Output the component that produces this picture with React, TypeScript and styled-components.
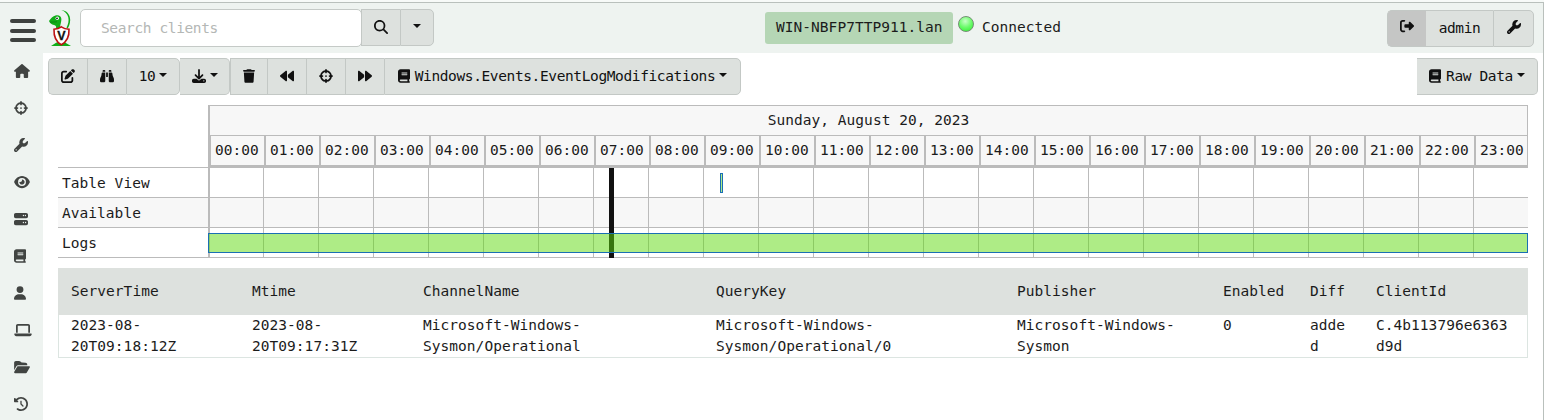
import React from 'react';
import styled, { createGlobalStyle } from 'styled-components';
import {
  FaPenToSquare, FaBinoculars, FaDownload, FaTrash, FaBackward, FaForward, FaCrosshairs, FaBook,
  FaMagnifyingGlass, FaRightFromBracket, FaWrench, FaHouse, FaEye, FaServer, FaUser, FaLaptop,
  FaFolderOpen, FaClockRotateLeft,
} from 'react-icons/fa6';

const Global = createGlobalStyle`
  *, *::before, *::after { box-sizing: border-box; }
  body {
    margin: 0;
    background: #fff;
    color: #1b1b1b;
    font-family: "DejaVu Sans Mono", "Liberation Mono", monospace;
    font-size: 14.5px;
    line-height: 21px;
    letter-spacing: 0.04px;
    overflow: hidden;
  }
`;

const Page = styled.div`
  width: 1544px;
  height: 420px;
  padding-top: 2px;
  display: flex;
  flex-direction: column;
  background: #f7faf8;
`;

const Frame = styled.div`
  flex: 1;
  display: flex;
  flex-direction: column;
  border-top: 1px solid #b9c0bc;
  border-right: 1px solid #b9c0bc;
  background: #fff;
`;

const Header = styled.header`
  height: 50px;
  flex: none;
  display: flex;
  align-items: flex-start;
  background: #eef3f0;
`;

const MenuButton = styled.div`
  width: 26px;
  height: 23px;
  margin: 16px 0 0 10px;
  display: flex;
  flex-direction: column;
  justify-content: space-between;
`;

const MenuBar = styled.span`
  height: 4px;
  border-radius: 2px;
  background: #3e413f;
`;

const Logo = styled.svg`
  width: 24px;
  height: 38px;
  margin: 6px 0 0 12px;
`;

const SearchInput = styled.input`
  width: 282px;
  height: 38px;
  margin: 6px 0 0 8px;
  padding: 0 0 0 20px;
  border: 1px solid #c5cac7;
  border-radius: 5px;
  background: #fff;
  font: inherit;
  letter-spacing: -0.38px;
  outline: none;
  &::placeholder { color: #b4b7b5; opacity: 1; }
`;

const Group = styled.div<{ $top?: number; $left?: number; $right?: number }>`
  display: flex;
  height: 37px;
  margin: ${p => p.$top ?? 0}px ${p => p.$right ?? 0}px 0 ${p => p.$left ?? 0}px;
`;

const Button = styled.button<{ $w: number; $start?: boolean; $end?: boolean; $active?: boolean; $edge?: boolean; $pad?: number }>`
  width: ${p => p.$w}px;
  height: 37px;
  padding: 0 0 ${p => p.$pad ?? 1}px;
  display: flex;
  align-items: center;
  justify-content: center;
  gap: 5px;
  border: 1px solid #c3c8c5;
  border-left-width: ${p => (p.$edge ? 0 : 1)}px;
  border-right-width: ${p => (p.$end ? 1 : 0)}px;
  border-radius: ${p => `${p.$start ? 5 : 0}px ${p.$end ? 5 : 0}px ${p.$end ? 5 : 0}px ${p.$start ? 5 : 0}px`};
  background: ${p => (p.$active ? '#c5c6c5' : '#dde1de')};
  color: #111;
  font: inherit;
  letter-spacing: -0.38px;
  white-space: nowrap;
`;

/* Glyph widths follow each icon's own aspect ratio at a 14px height. */
const Glyph = styled.span<{ $w?: number }>`
  display: block;
  flex: none;
  width: ${p => p.$w ?? 14}px;
  height: 14px;
  svg { display: block; width: 100%; height: 100%; }
`;

const Caret = styled.span`
  border-top: 4px solid #111;
  border-left: 4px solid transparent;
  border-right: 4px solid transparent;
  margin: 0 0 2px -1px;
`;

const Host = styled.div`
  width: 188px;
  height: 32px;
  margin: 9px 0 0 331px;
  padding-left: 11px;
  line-height: 30px;
  border-radius: 3px;
  background: #b5d6b5;
`;

const StatusDot = styled.span`
  width: 16px;
  height: 16px;
  margin: 13px 8px 0 5px;
  border: 1px solid #738f73;
  border-radius: 50%;
  background: radial-gradient(circle at 45% 30%, #c9ffc9 0, #6bfb6b 50%, #2cec2c 100%);
`;

const Status = styled.span`
  flex: 1;
  margin-top: 14px;
`;

const Body = styled.div`
  flex: 1;
  display: flex;
`;

const Sidebar = styled.nav`
  width: 43px;
  flex: none;
  padding: 0 0 0 14px;
  display: flex;
  flex-direction: column;
  background: #eef3f0;
  color: #414442;
`;

const NavItem = styled.div`
  height: 37px;
  padding-bottom: 1px;
  display: flex;
  align-items: center;
`;

const Main = styled.main`
  flex: 1;
  min-width: 0;
`;

const Toolbar = styled.div`
  display: flex;
  justify-content: space-between;
  padding: 5px 5px 0;
`;

const Timeline = styled.section`
  width: 1470px;
  margin: 10px 0 0 15px;
`;

const TimeHead = styled.div`
  height: 62px;
  margin-left: 150px;
  border: solid #bbb;
  border-width: 1px 1px 2px 2px;
  background: #f7f7f7;
`;

const Day = styled.div`
  height: 29px;
  line-height: 28px;
  text-align: center;
`;

const Hours = styled.div`
  height: 30px;
  margin-left: -1px;
  display: flex;
  border-top: 1px solid #bbb;
`;

const Hour = styled.div`
  width: 55px;
  flex: none;
  padding-left: 4px;
  line-height: 28px;
  border-left: 2px solid #bbb;
  &:last-child { width: 53px; }
`;

const Rows = styled.div`
  position: relative;
  border-top: 1px solid #bbb;
`;

const Row = styled.div<{ $shade?: boolean }>`
  height: 30px;
  display: flex;
  border-bottom: 1px solid #bbb;
  background: ${p => (p.$shade ? '#f7f7f7' : '#fff')};
`;

const RowLabel = styled.div`
  width: 150px;
  flex: none;
  padding-left: 4px;
  line-height: 31px;
`;

const Cells = styled.div`
  flex: 1;
  display: flex;
  border-left: 2px solid #bbb;
`;

const Cell = styled.div`
  width: 55px;
  flex: none;
  border-right: 1px solid #bbb;
  &:first-child { width: 54px; }
  &:last-child { width: 54px; border-right: 0; }
`;

const Marker = styled.div`
  position: absolute;
  left: 551px;
  top: 0;
  width: 5px;
  height: 90px;
  background: #111;
`;

const Span = styled.div<{ $x: number; $y: number; $w: number }>`
  position: absolute;
  left: ${p => p.$x}px;
  top: ${p => p.$y}px;
  width: ${p => p.$w}px;
  height: 20px;
  border: 1px solid #1a6fb3;
  background: rgba(94, 217, 14, 0.5);
`;

const Table = styled.table`
  width: 1470px;
  margin: 10px 0 0 15px;
  border-collapse: separate;
  border-spacing: 0;
  table-layout: fixed;
`;

const Th = styled.th`
  height: 47px;
  padding: 0 0 0 13px;
  text-align: left;
  font-weight: normal;
  background: #dde1de;
`;

const Td = styled.td`
  height: 43px;
  padding: 0 0 0 13px;
  vertical-align: top;
  white-space: pre;
  border-bottom: 1px solid #dce5e1;
  &:first-child { border-left: 1px solid #dce5e1; padding-left: 12px; }
  &:last-child { border-right: 1px solid #dce5e1; }
`;

const navItems = [
  { Icon: FaHouse, width: 16 },
  { Icon: FaCrosshairs, width: 14 },
  { Icon: FaWrench, width: 14 },
  { Icon: FaEye, width: 16 },
  { Icon: FaServer, width: 14 },
  { Icon: FaBook, width: 12 },
  { Icon: FaUser, width: 12 },
  { Icon: FaLaptop, width: 18 },
  { Icon: FaFolderOpen, width: 16 },
  { Icon: FaClockRotateLeft, width: 14 },
];
const hours = Array.from({ length: 24 }, (_, h) => `${String(h).padStart(2, '0')}:00`);
const columns = [
  { name: 'ServerTime', width: 181, value: '2023-08-\n20T09:18:12Z' },
  { name: 'Mtime', width: 171, value: '2023-08-\n20T09:17:31Z' },
  { name: 'ChannelName', width: 293, value: 'Microsoft-Windows-\nSysmon/Operational' },
  { name: 'QueryKey', width: 301, value: 'Microsoft-Windows-\nSysmon/Operational/0' },
  { name: 'Publisher', width: 206, value: 'Microsoft-Windows-\nSysmon' },
  { name: 'Enabled', width: 87, value: '0' },
  { name: 'Diff', width: 66, value: 'adde\nd' },
  { name: 'ClientId', width: 165, value: 'C.4b113796e6363\nd9d' },
];

const GeckoLogo = () => (
  <Logo viewBox="0 0 24 38">
    <path d="M13.5 1.200C18 1 22.300 5 22.200 11C22 15 21 17.500 19.500 19.500L18.500 18.500C20.300 15 21 12 20.300 8.500C19.500 4.800 17 2.300 13.500 1.200Z" fill="#10ad18" />
    <path d="M1 12C2.500 9.500 5 7.500 7.500 6.600C10.500 5.400 13.300 7.400 13.400 10C13.400 13 12.300 15 12 19L8 19C8.500 17.500 8 16.500 6 16C3.500 15.500 1.500 13.800 1 12Z" fill="#10ad18" />
    <path d="M2 13.200L9 12.800" stroke="#087a10" strokeWidth="0.700" />
    <circle cx="9.300" cy="9.300" r="1.700" fill="#fff" />
    <circle cx="9" cy="9.300" r="0.900" fill="#111" />
    <path d="M3 37L8.500 33.500H17L23 37Z" fill="#10ad18" />
    <path d="M6 20.300Q10.500 20 13.300 17.800Q16.500 20 21 20.300Q21.500 31.500 13.300 35.800Q5.500 31.500 6 20.300Z" fill="#fff" stroke="#bd1212" strokeWidth="1.600" />
    <text x="13.400" y="31" textAnchor="middle" fontFamily="Liberation Sans, sans-serif" fontWeight="700" fontSize="12.500" stroke="#111" strokeWidth="0.300" fill="#111">V</text>
  </Logo>
);

export default function App() {
  return (
    <Page>
      <Global />
      <Frame>
        <Header>
          <MenuButton><MenuBar /><MenuBar /><MenuBar /></MenuButton>
          <GeckoLogo />
          <SearchInput placeholder="Search clients" />
          <Group $top={6} $left={-1}>
            <Button $w={39} $pad={2}><Glyph><FaMagnifyingGlass /></Glyph></Button>
            <Button $w={34} $end $pad={2}><Caret /></Button>
          </Group>
          <Host>WIN-NBFP7TTP911.lan</Host>
          <StatusDot />
          <Status>Connected</Status>
          <Group $top={7} $right={9}>
            <Button $w={39} $start $active $pad={5}><Glyph><FaRightFromBracket /></Glyph></Button>
            <Button $w={67} $edge>admin</Button>
            <Button $w={41} $end $pad={3}><Glyph><FaWrench /></Glyph></Button>
          </Group>
        </Header>
        <Body>
          <Sidebar>
            {navItems.map(({ Icon, width }, i) => (
              <NavItem key={i}><Glyph $w={width}><Icon /></Glyph></NavItem>
            ))}
          </Sidebar>
          <Main>
            <Toolbar>
              <Group>
                <Button $w={39} $start><Glyph><FaPenToSquare /></Glyph></Button>
                <Button $w={39}><Glyph><FaBinoculars /></Glyph></Button>
                <Button $w={54} $end>10<Caret /></Button>
                <Button $w={50} $end $edge><Glyph><FaDownload /></Glyph><Caret /></Button>
                <Button $w={37}><Glyph $w={12}><FaTrash /></Glyph></Button>
                <Button $w={39}><Glyph><FaBackward /></Glyph></Button>
                <Button $w={39}><Glyph><FaCrosshairs /></Glyph></Button>
                <Button $w={39}><Glyph><FaForward /></Glyph></Button>
                <Button $w={357} $end><Glyph $w={12}><FaBook /></Glyph>Windows.Events.EventLogModifications<Caret /></Button>
              </Group>
              <Group>
                <Button $w={121} $end $edge><Glyph $w={12}><FaBook /></Glyph>Raw Data<Caret /></Button>
              </Group>
            </Toolbar>
            <Timeline>
              <TimeHead>
                <Day>Sunday, August 20, 2023</Day>
                <Hours>{hours.map(h => <Hour key={h}>{h}</Hour>)}</Hours>
              </TimeHead>
              <Rows>
                {['Table View', 'Available', 'Logs'].map((label, i) => (
                  <Row key={label} $shade={i === 1}>
                    <RowLabel>{label}</RowLabel>
                    <Cells>{hours.map(h => <Cell key={h} />)}</Cells>
                  </Row>
                ))}
                <Marker />
                <Span $x={662} $y={5} $w={3} />
                <Span $x={150} $y={65} $w={1320} />
              </Rows>
            </Timeline>
            <Table>
              <colgroup>{columns.map(c => <col key={c.name} width={c.width} />)}</colgroup>
              <thead><tr>{columns.map(c => <Th key={c.name}>{c.name}</Th>)}</tr></thead>
              <tbody><tr>{columns.map(c => <Td key={c.name}>{c.value}</Td>)}</tr></tbody>
            </Table>
          </Main>
        </Body>
      </Frame>
    </Page>
  );
}
